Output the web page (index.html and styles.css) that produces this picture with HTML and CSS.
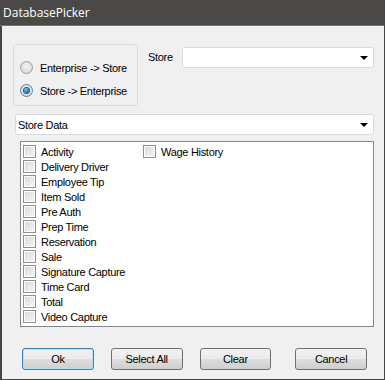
FILE: index.html
```html
<!DOCTYPE html>
<html lang="en">
<head>
    <meta charset="UTF-8">
    <title>DatabasePicker</title>
    <link rel="stylesheet" href="styles.css">
</head>
<body>
    <div class="window">
        <div class="titlebar">DatabasePicker</div>
        <div class="client">
            <div class="top-row">
                <div class="group">
                    <label class="radio"><span class="dot"></span>Enterprise -&gt; Store</label>
                    <label class="radio"><span class="dot checked"></span>Store -&gt; Enterprise</label>
                </div>
                <span class="store-label">Store</span>
                <div class="combo store-combo"><span class="arrow"></span></div>
            </div>

            <div class="combo data-combo"><span class="value">Store Data</span><span class="arrow"></span></div>

            <div class="checklist">
                <label class="check"><span class="box"></span>Activity</label>
                <label class="check"><span class="box"></span>Delivery Driver</label>
                <label class="check"><span class="box"></span>Employee Tip</label>
                <label class="check"><span class="box"></span>Item Sold</label>
                <label class="check"><span class="box"></span>Pre Auth</label>
                <label class="check"><span class="box"></span>Prep Time</label>
                <label class="check"><span class="box"></span>Reservation</label>
                <label class="check"><span class="box"></span>Sale</label>
                <label class="check"><span class="box"></span>Signature Capture</label>
                <label class="check"><span class="box"></span>Time Card</label>
                <label class="check"><span class="box"></span>Total</label>
                <label class="check"><span class="box"></span>Video Capture</label>
                <label class="check"><span class="box"></span>Wage History</label>
            </div>

            <div class="buttons">
                <button class="default">Ok</button>
                <button>Select All</button>
                <button>Clear</button>
                <button>Cancel</button>
            </div>
        </div>
    </div>
</body>
</html>
```

FILE: styles.css
```css
body {
    margin: 0;
    font-family: "Liberation Sans", Arial, sans-serif;
    font-size: 11px;
    letter-spacing: -0.3px;
    color: #000;
}
.window {
    width: 385px;
    height: 380px;
    box-sizing: border-box;
    background: #f0f0f0;
    border: 1px solid #464646;
    border-top: none;
    border-left-width: 2px;
}
.titlebar {
    height: 26px;
    box-sizing: border-box;
    background: #4b4947;
    border-bottom: 1px solid #6b7783;
    color: #fff;
    font-family: "Open Sans", "DejaVu Sans", sans-serif;
    font-size: 12px;
    letter-spacing: 0;
    line-height: 26px;
    padding-left: 3px;
    margin-left: -2px;
}
.top-row {
    display: flex;
    align-items: flex-start;
    padding: 18px 0 0 11px;
}
.group {
    width: 125px;
    height: 62px;
    box-sizing: border-box;
    border: 1px solid #d5dfe5;
    border-radius: 3px;
    display: flex;
    flex-direction: column;
    padding: 16px 0 0 6px;
    gap: 10px;
}
.radio {
    display: flex;
    align-items: center;
    height: 13px;
    gap: 7px;
}
.dot {
    width: 11px;
    height: 11px;
    border-radius: 50%;
    border: 1px solid #a0a0a0;
    background: radial-gradient(circle at 50% 40%, #f4f4f4 0, #dcdcdc 70%, #cfcfcf 100%);
    display: flex;
    align-items: center;
    justify-content: center;
}
.dot.checked {
    border-color: #5b7fa3;
}
.dot.checked::after {
    content: "";
    width: 5px;
    height: 5px;
    border-radius: 50%;
    background: radial-gradient(circle at 40% 35%, #7fd0f3 0, #1a7bb3 55%, #0b3d66 100%);
    box-shadow: 0 0 0 1px #245f8c;
}
.store-label {
    width: 26px;
    margin: 7px 0 0 10px;
}
.combo {
    height: 21px;
    box-sizing: border-box;
    background: #fff;
    border: 1px solid #d9dde2;
    border-radius: 2px;
    display: flex;
    align-items: center;
    position: relative;
}
.store-combo {
    width: 192px;
    margin: 3px 0 0 8px;
}
.data-combo {
    width: 359px;
    margin: 8px 0 0 13px;
}
.value {
    padding-left: 2px;
}
.arrow {
    position: absolute;
    right: 5px;
    top: 8px;
    width: 0;
    height: 0;
    border-left: 4px solid transparent;
    border-right: 4px solid transparent;
    border-top: 4px solid #000;
}
.checklist {
    width: 354px;
    height: 186px;
    box-sizing: border-box;
    margin: 6px 0 0 18px;
    background: #fff;
    border: 1px solid #82878f;
    padding: 2px 0 0 2px;
    display: grid;
    grid-auto-flow: column;
    grid-template-rows: repeat(12, 15px);
    grid-template-columns: 120px 120px;
}
.check {
    display: flex;
    align-items: center;
    gap: 5px;
}
.box {
    width: 13px;
    height: 13px;
    box-sizing: border-box;
    border: 1px solid #8f8f8f;
    background: #fff;
    position: relative;
}
.box::after {
    content: "";
    position: absolute;
    left: 1px;
    top: 1px;
    right: 1px;
    bottom: 1px;
    background: linear-gradient(135deg, #dcdcdc, #f4f4f4);
}
.buttons {
    display: flex;
    padding: 21px 0 0 20px;
}
button {
    width: 73px;
    height: 22px;
    box-sizing: border-box;
    font-family: "Liberation Sans", Arial, sans-serif;
    font-size: 11px;
    letter-spacing: -0.3px;
    color: #000;
    border: 1px solid #707070;
    border-radius: 3px;
    background: linear-gradient(#f2f2f2 0, #ebebeb 50%, #dddddd 51%, #cfcfcf 100%);
    padding: 0;
    margin-right: 17px;
}
button:nth-child(3) {
    margin-right: 24px;
}
button.default {
    border-color: #3c7fb1;
    box-shadow: inset 0 0 0 1px #b8e0f5;
}
```
